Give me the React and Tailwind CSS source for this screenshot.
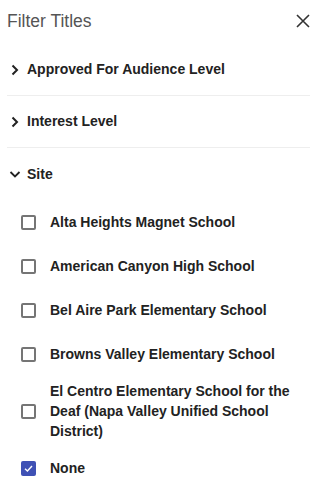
import { useState } from "react";

const sites = [
  "Alta Heights Magnet School",
  "American Canyon High School",
  "Bel Aire Park Elementary School",
  "Browns Valley Elementary School",
  "El Centro Elementary School for the Deaf (Napa Valley Unified School District)",
  "None",
];

function Chevron({ open }) {
  return open ? (
    <svg width="12" height="12" viewBox="0 0 12 12" className="ml-[2px] mr-[6px]">
      <path d="M1.5 4 L6 8.5 L10.5 4" fill="none" stroke="#222" strokeWidth="1.8" />
    </svg>
  ) : (
    <svg width="12" height="12" viewBox="0 0 12 12" className="ml-[2px] mr-[6px]">
      <path d="M3.5 1.5 L8 6 L3.5 10.5" fill="none" stroke="#222" strokeWidth="2" />
    </svg>
  );
}

function Box({ checked }) {
  return checked ? (
    <span className="flex h-[15px] w-[15px] shrink-0 items-center justify-center rounded-[2px] bg-[#3f51b5]">
      <svg width="11" height="11" viewBox="0 0 11 11">
        <path d="M2 5.8 L4.4 8 L9 3" fill="none" stroke="#fff" strokeWidth="1.4" />
      </svg>
    </span>
  ) : (
    <span className="h-[15px] w-[15px] shrink-0 rounded-[2px] border-2 border-[#757575] bg-white" />
  );
}

export default function App() {
  const [checked, setChecked] = useState(["None"]);

  const toggle = (s) =>
    setChecked((c) => (c.includes(s) ? c.filter((x) => x !== s) : [...c, s]));

  return (
    <div className="h-[491px] w-[317px] overflow-hidden bg-white [font-family:'Liberation_Sans',Arial,sans-serif] text-[#222]">
      {/* header */}
      <div className="flex h-[44px] items-center justify-between pl-[7px] pr-[7px] pb-[2px]">
        <h1 className="text-[17.5px] text-[#555]">Filter Titles</h1>
        <svg width="14" height="14" viewBox="0 0 14 14">
          <path d="M1 1 L13 13 M13 1 L1 13" stroke="#333" strokeWidth="1.6" />
        </svg>
      </div>

      <div className="mx-[7px]">
        <div className="flex h-[52px] items-center border-b border-[#eee] font-bold text-[14px]">
          <Chevron />
          Approved For Audience Level
        </div>
        <div className="flex h-[52px] items-center border-b border-[#eee] font-bold text-[14px]">
          <Chevron />
          Interest Level
        </div>
        <div className="flex h-[52px] items-center font-bold text-[14px]">
          <Chevron open />
          Site
        </div>
      </div>

      {/* site options */}
      <ul>
        {sites.map((s) => (
          <li
            key={s}
            onClick={() => toggle(s)}
            className="flex min-h-[44px] cursor-pointer items-center pl-[21px] pr-[10px]"
          >
            <Box checked={checked.includes(s)} />
            <span className="ml-[14px] py-[5px] text-[14px] font-bold leading-[20px]">{s}</span>
          </li>
        ))}
      </ul>
    </div>
  );
}
